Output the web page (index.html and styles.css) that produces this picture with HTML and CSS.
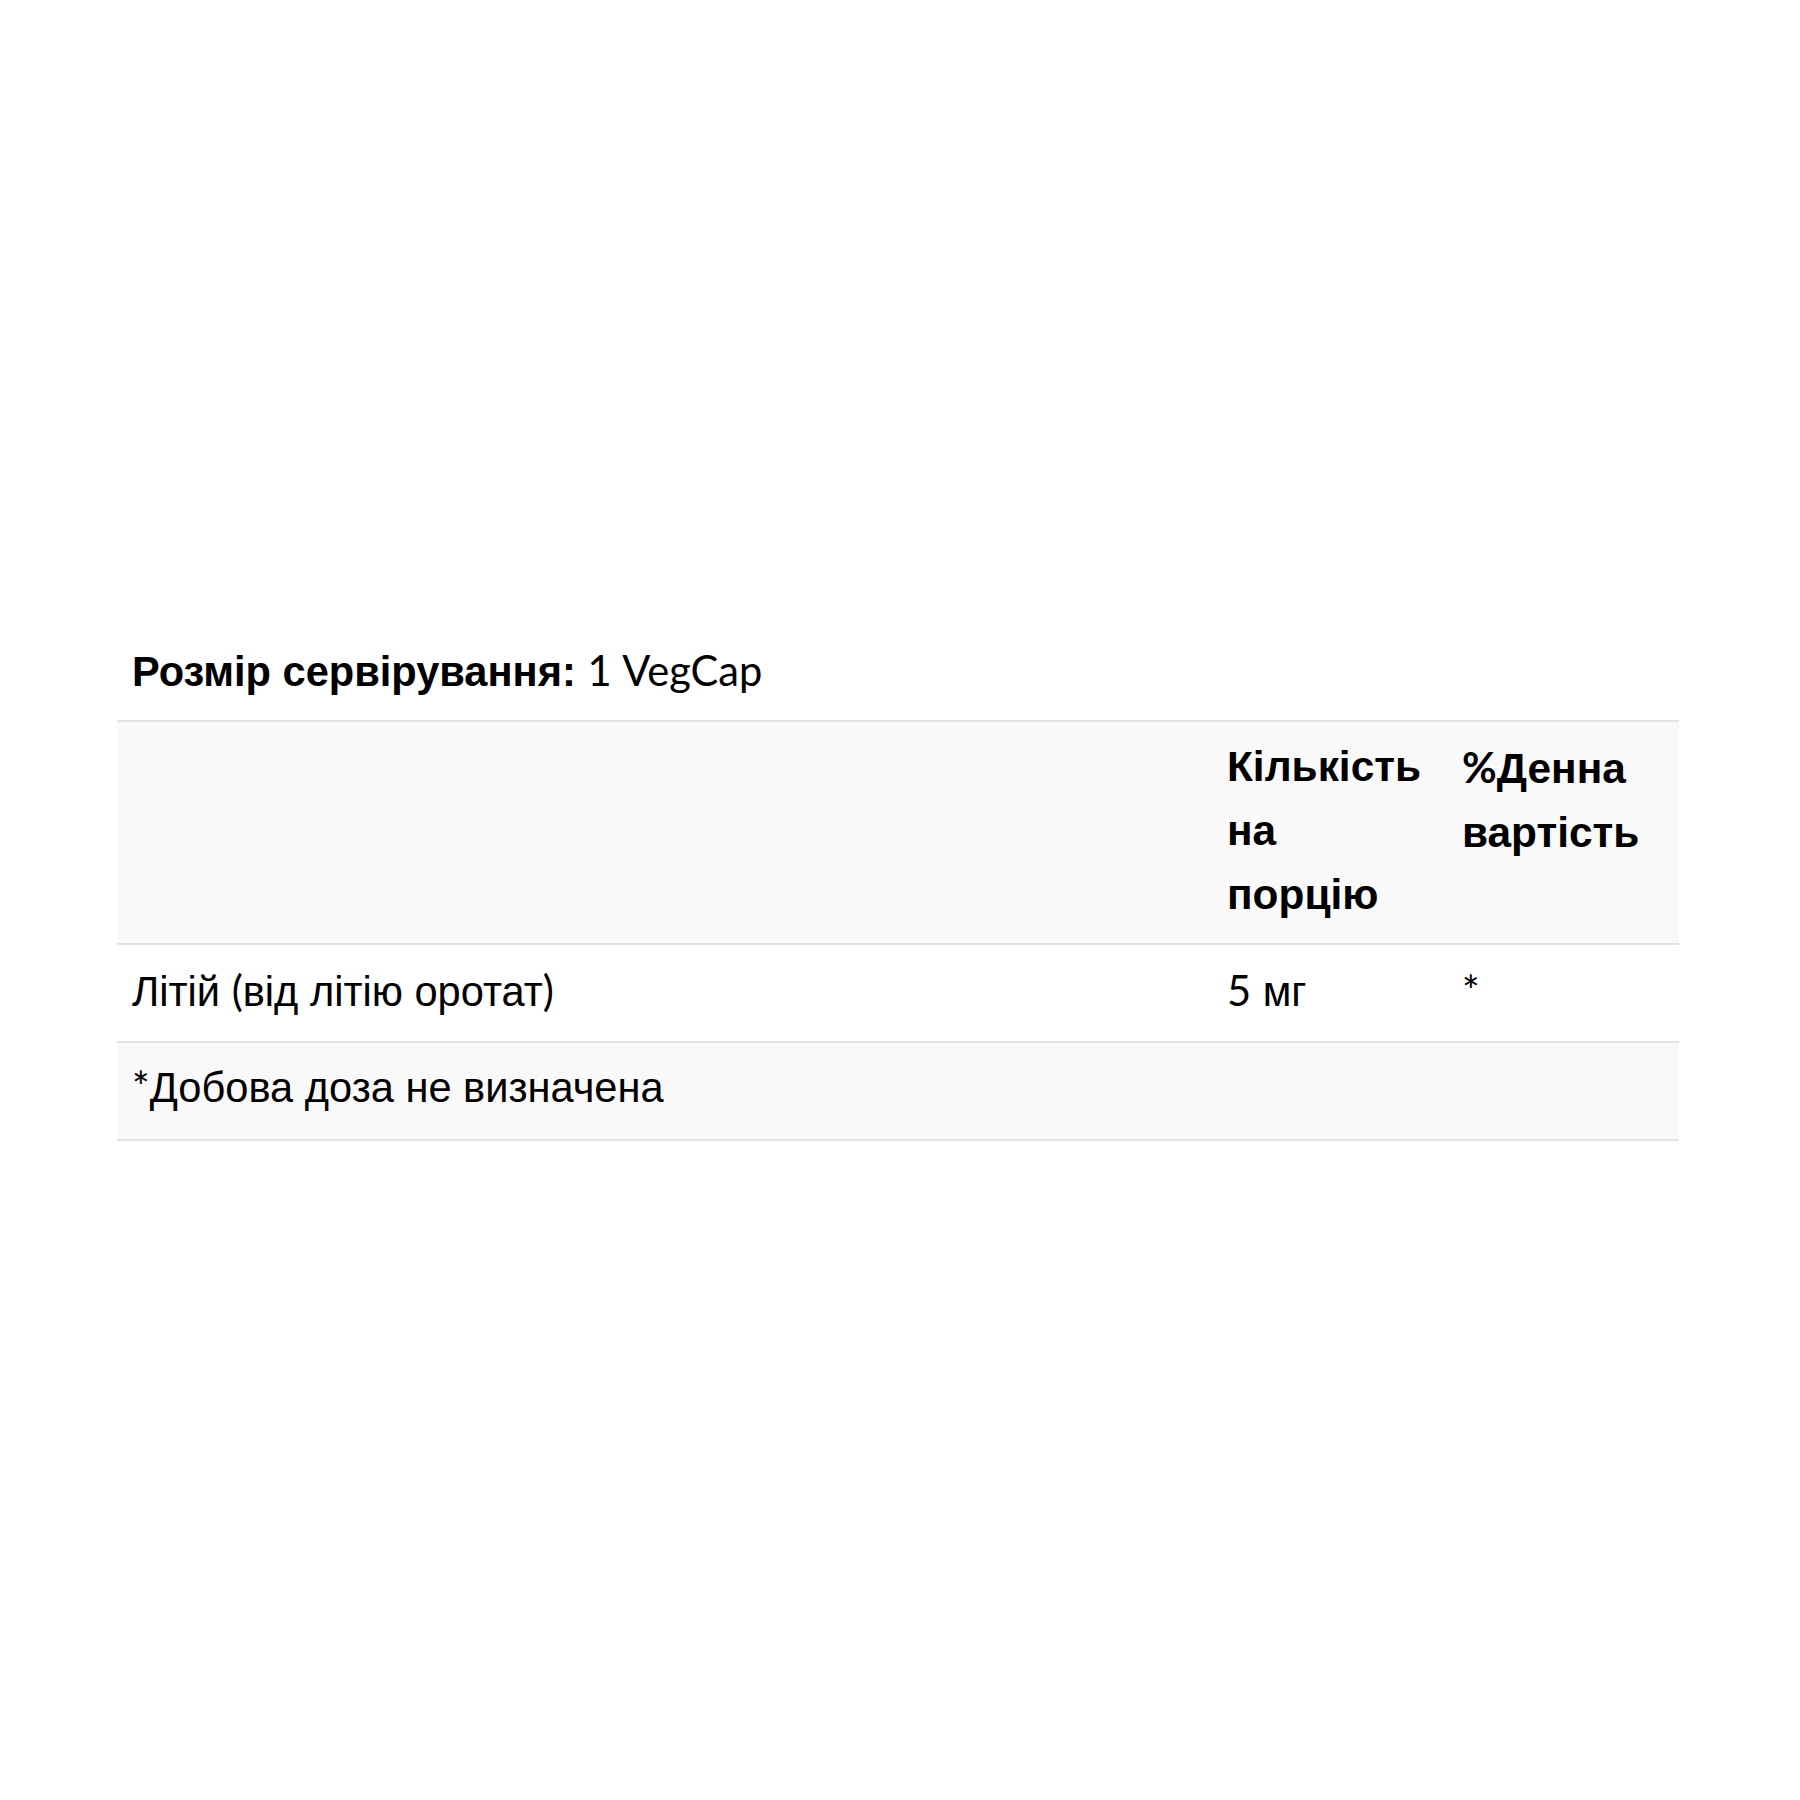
FILE: index.html
```html
<!DOCTYPE html>
<html lang="uk">
<head>
<meta charset="utf-8">
<title>Розмір сервірування</title>
<link rel="stylesheet" href="styles.css">
</head>
<body>
<div class="panel">
  <div class="serving"><strong>Розмір сервірування:</strong> <span class="lt">1 VegCap</span></div>
  <table class="facts">
    <colgroup>
      <col class="c-name">
      <col class="c-amount">
      <col class="c-dv">
    </colgroup>
    <thead>
      <tr class="head">
        <th></th>
        <th>Кількість на порцію</th>
        <th><span class="lt">%</span>Денна вартість</th>
      </tr>
    </thead>
    <tbody>
      <tr class="row">
        <td>Літій <span class="lt">(</span>від літію оротат<span class="lt">)</span></td>
        <td><span class="lt">5</span> мг</td>
        <td><span class="lt">*</span></td>
      </tr>
      <tr class="foot">
        <td colspan="3"><span class="lt">*</span>Добова доза не визначена</td>
      </tr>
    </tbody>
  </table>
</div>
</body>
</html>
```

FILE: styles.css
```css
html, body {
  margin: 0;
  padding: 0;
  background: #ffffff;
}

body {
  font-family: "Liberation Sans", Arial, sans-serif;
  font-size: 41.6px;
  line-height: 64px;
  color: #000000;
}

.lt {
  font-family: Lato, "Liberation Sans", sans-serif;
}

.panel {
  padding-top: 638px;
  padding-left: 117px;
  width: 1562px;
}

.serving {
  padding-left: 15px;
  margin-bottom: 16px;
}

.serving strong {
  font-weight: 700;
}

.facts {
  width: 1562px;
  border-collapse: collapse;
  table-layout: fixed;
}

.c-name { width: 1095px; }
.c-amount { width: 235px; }
.c-dv { width: 232px; }

.facts th,
.facts td {
  padding: 13px 14px 16px 15px;
  text-align: left;
  vertical-align: top;
}

.facts th {
  font-weight: 700;
  font-size: 42.4px;
}

.head {
  background: #f9f9f9;
  border-top: 2px solid #e2e2e2;
  border-bottom: 2px solid #e2e2e2;
}

.row td {
  padding-bottom: 17px;
}

.foot {
  background: #f9f9f9;
  border-top: 2px solid #e2e2e2;
  border-bottom: 2px solid #e2e2e2;
}

.foot td {
  padding-top: 11px;
  padding-bottom: 19px;
}
```
